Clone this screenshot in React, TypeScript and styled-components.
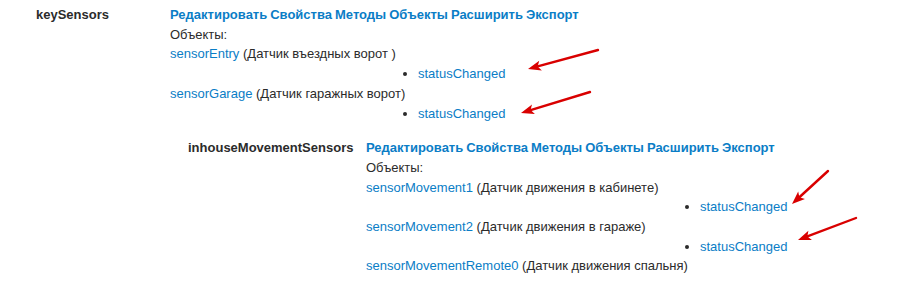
import React from "react";
import styled, { createGlobalStyle } from "styled-components";

const GlobalStyle = createGlobalStyle`
  html, body {
    margin: 0;
    padding: 0;
    background: #fff;
  }
  body {
    font-family: "Liberation Sans", Arial, sans-serif;
    font-size: 13px;
    line-height: 19.7px;
    color: #2b2b2b;
  }
`;

type Sensor = {
  name: string;
  title: string;
  methods: string[];
};

type BlockProps = {
  label: string;
  labelIndent: number;
  labelWidth: number;
  methodsIndent: number;
  sensors: Sensor[];
  children?: React.ReactNode;
};

const PageSC = styled.div`
  position: relative;
  width: 900px;
  height: 288px;
  overflow: hidden;
  padding-top: 5px;
  box-sizing: border-box;
`;

const BlockSC = styled.div<{ $nested?: boolean }>`
  display: flex;
  align-items: flex-start;
  margin-top: ${({ $nested }) => ($nested ? "15px" : "0")};
`;

const LabelSC = styled.div<{ $indent: number; $width: number }>`
  flex: none;
  box-sizing: border-box;
  width: ${({ $width }) => $width}px;
  padding-left: ${({ $indent }) => $indent}px;
  font-weight: bold;
  color: #2b2b2b;
`;

const ContentSC = styled.div`
  flex: 1;
  min-width: 0;
`;

const ActionsSC = styled.div`
  display: flex;
  gap: 3px;
  white-space: nowrap;
`;

const ActionSC = styled.a`
  font-weight: bold;
  color: #0a7dc6;
  text-decoration: none;
  cursor: pointer;
`;

const LineSC = styled.div`
  white-space: nowrap;
`;

const LinkSC = styled.a`
  color: #0a7dc6;
  text-decoration: none;
  cursor: pointer;
`;

const MethodsSC = styled.ul<{ $indent: number }>`
  margin: 0;
  padding-left: ${({ $indent }) => $indent}px;
  list-style: disc;
  color: #2b2b2b;
`;

const OverlaySC = styled.svg`
  position: absolute;
  left: 0;
  top: 0;
  pointer-events: none;
`;

const actions = [
  "Редактировать",
  "Свойства",
  "Методы",
  "Объекты",
  "Расширить",
  "Экспорт",
];

const ObjectBlock: React.FC<BlockProps & { nested?: boolean }> = ({
  label,
  labelIndent,
  labelWidth,
  methodsIndent,
  sensors,
  children,
  nested,
}) => {
  return (
    <BlockSC $nested={nested}>
      <LabelSC $indent={labelIndent} $width={labelWidth}>
        {label}
      </LabelSC>
      <ContentSC>
        <ActionsSC>
          {actions.map((a) => (
            <ActionSC key={a}>{a}</ActionSC>
          ))}
        </ActionsSC>
        <LineSC>Объекты:</LineSC>
        {sensors.map((s) => (
          <React.Fragment key={s.name}>
            <LineSC>
              <LinkSC>{s.name}</LinkSC> ({s.title})
            </LineSC>
            {s.methods.length > 0 && (
              <MethodsSC $indent={methodsIndent}>
                {s.methods.map((m) => (
                  <li key={m}>
                    <LinkSC>{m}</LinkSC>
                  </li>
                ))}
              </MethodsSC>
            )}
          </React.Fragment>
        ))}
        {children}
      </ContentSC>
    </BlockSC>
  );
};

// annotation arrows drawn over the page: [tailX, tailY, tipX, tipY]
const arrows: [number, number, number, number][] = [
  [598, 50, 528, 69],
  [590, 92, 521, 113],
  [828, 171, 792, 204],
  [856, 218, 798, 240],
];

const Arrow: React.FC<{ a: [number, number, number, number] }> = ({ a }) => {
  const [x1, y1, x2, y2] = a;
  const dx = x2 - x1;
  const dy = y2 - y1;
  const len = Math.hypot(dx, dy);
  const ux = dx / len;
  const uy = dy / len;
  const headLen = 13;
  const headW = 5;
  const bx = x2 - ux * headLen;
  const by = y2 - uy * headLen;
  const px = -uy;
  const py = ux;
  const pts = [
    [x2, y2],
    [bx + px * headW, by + py * headW],
    [bx + ux * 3, by + uy * 3],
    [bx - px * headW, by - py * headW],
  ]
    .map((p) => p.join(","))
    .join(" ");
  return (
    <g>
      <line
        x1={x1}
        y1={y1}
        x2={bx + ux * 3}
        y2={by + uy * 3}
        stroke="#d90000"
        strokeWidth={2.4}
        strokeLinecap="round"
      />
      <polygon points={pts} fill="#d90000" />
    </g>
  );
};

const App: React.FC = () => {
  return (
    <>
      <GlobalStyle />
      <PageSC>
        <ObjectBlock
          label="keySensors"
          labelIndent={36}
          labelWidth={170}
          methodsIndent={248}
          sensors={[
            {
              name: "sensorEntry",
              title: "Датчик въездных ворот ",
              methods: ["statusChanged"],
            },
            {
              name: "sensorGarage",
              title: "Датчик гаражных ворот",
              methods: ["statusChanged"],
            },
          ]}
        >
          <ObjectBlock
            nested
            label="inhouseMovementSensors"
            labelIndent={18}
            labelWidth={196}
            methodsIndent={334}
            sensors={[
              {
                name: "sensorMovement1",
                title: "Датчик движения в кабинете",
                methods: ["statusChanged"],
              },
              {
                name: "sensorMovement2",
                title: "Датчик движения в гараже",
                methods: ["statusChanged"],
              },
              {
                name: "sensorMovementRemote0",
                title: "Датчик движения спальня",
                methods: [],
              },
            ]}
          />
        </ObjectBlock>
        <OverlaySC width={900} height={288}>
          {arrows.map((a, i) => (
            <Arrow key={i} a={a} />
          ))}
        </OverlaySC>
      </PageSC>
    </>
  );
};

export default App;
